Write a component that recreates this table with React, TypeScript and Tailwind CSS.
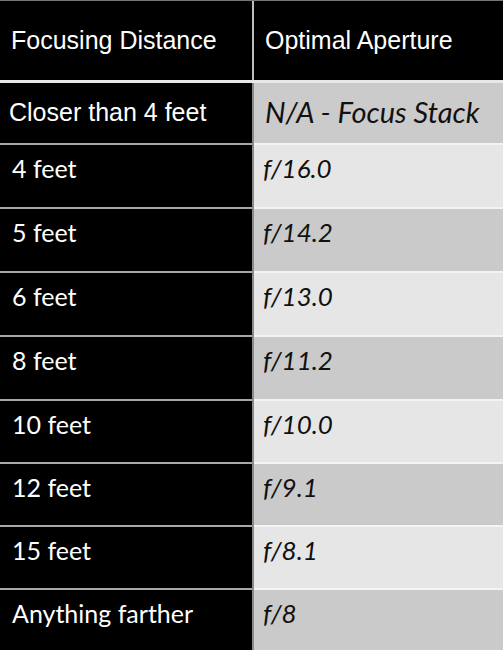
const rows = [
  { dist: "4 feet", ap: "f/16.0", h: "h-[64px]" },
  { dist: "5 feet", ap: "f/14.2", h: "h-[64px]" },
  { dist: "6 feet", ap: "f/13.0", h: "h-[64px]" },
  { dist: "8 feet", ap: "f/11.2", h: "h-[64px]" },
  { dist: "10 feet", ap: "f/10.0", h: "h-[63px]" },
  { dist: "12 feet", ap: "f/9.1", h: "h-[63px]" },
  { dist: "15 feet", ap: "f/8.1", h: "h-[63px]" },
  { dist: "Anything farther", ap: "f/8", h: "h-[62px]" },
];

export default function App() {
  return (
    <div className="w-[503px] h-[650px] overflow-hidden bg-black text-white">
      {/* header */}
      <div className="flex h-[83px] border-t border-[#777] border-b-[3px] border-b-[#e8e8e8] font-['Liberation_Sans',Arial,sans-serif] text-[25px]">
        <div className="w-[252px] flex items-center pl-[11px]">Focusing Distance</div>
        <div className="w-[2px] bg-[#bdbdbd]" />
        <div className="flex-1 flex items-center pl-[11px]">Optimal Aperture</div>
      </div>

      {/* first row */}
      <div className="flex h-[60px]">
        <div className="w-[252px] flex items-center pl-[9px] font-['Liberation_Sans',Arial,sans-serif] text-[25px]">
          Closer than 4 feet
        </div>
        <div className="w-[2px] bg-[#8a8a8a]" />
        <div className="flex-1 flex items-center pl-[11px] pb-[2px] bg-[#cbcbcb] text-[#111] italic font-['Lato',sans-serif] text-[29px]">
          N/A - Focus Stack
        </div>
      </div>

      {rows.map((r, i) => (
        <div key={r.dist} className={`flex ${r.h}`}>
          <div className="w-[252px] border-t-2 border-[#a8a8a8] pl-[12px] pt-[8px] font-['Lato',sans-serif] text-[25px] leading-[30px]">
            {r.dist}
          </div>
          <div className="w-[2px] bg-[#8a8a8a]" />
          <div
            className={`flex-1 border-t-2 border-[#f4f4f4] pl-[9px] pt-[8px] italic text-[#111] font-['Lato',sans-serif] text-[26px] leading-[30px] ${
              i % 2 === 0 ? "bg-[#e6e6e6]" : "bg-[#cacaca]"
            }`}
          >
            {r.ap}
          </div>
        </div>
      ))}
    </div>
  );
}
